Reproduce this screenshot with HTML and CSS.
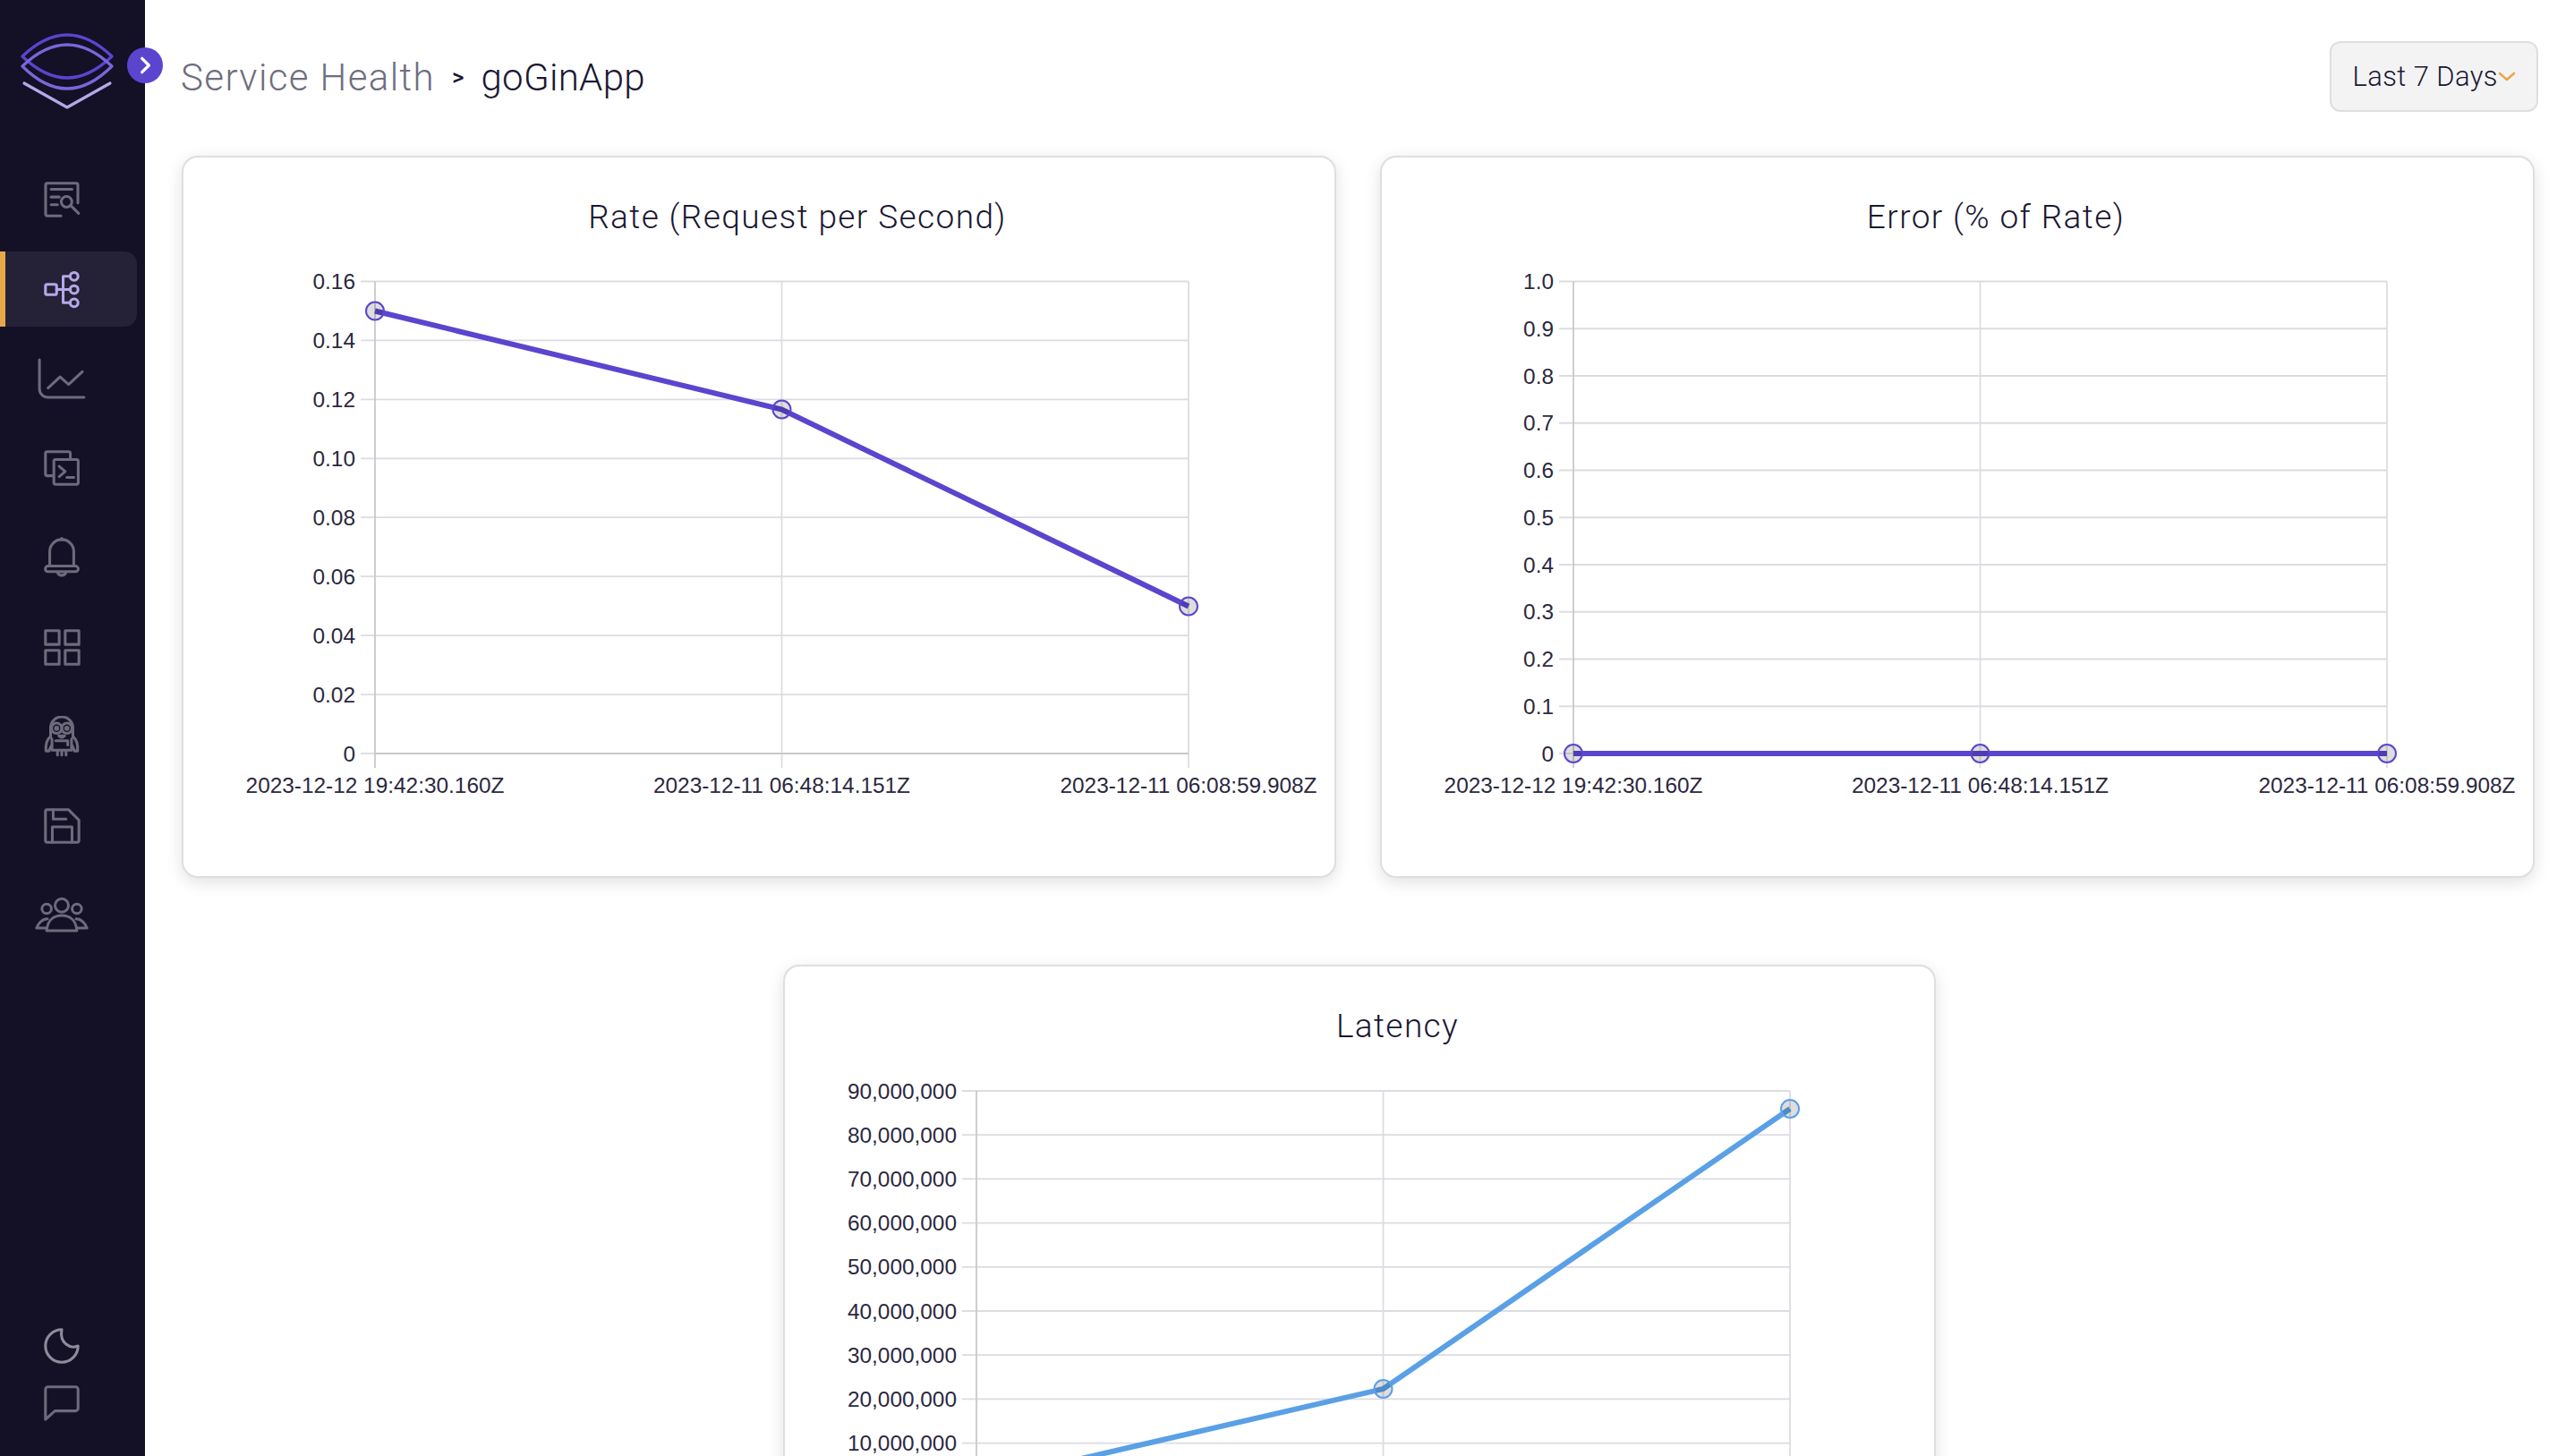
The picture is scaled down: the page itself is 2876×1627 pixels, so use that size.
FILE: index.html
```html
<!DOCTYPE html>
<html lang="en">
<head>
    <meta charset="UTF-8">
    <meta name="viewport" content="width=device-width, initial-scale=1.0">
    <link rel="stylesheet" href="styles.css">
    <title>Service Health</title>
</head>
<body>
    <div class="app">
        <aside class="sidebar">
            <div class="logo">
                <svg width="104" height="86" viewBox="-2 0 104 86" fill="none" stroke-width="3.2" stroke-linecap="round" stroke-linejoin="round">
                    <path stroke="#5b45cf" d="M0 26 Q50 -22 100 26 Q50 74 0 26Z"/>
                    <path stroke="#7a66d9" d="M0 37 Q50 -11 100 37 Q50 87 0 37Z"/>
                    <path stroke="#b5a8e8" d="M2 56 L50 83 L98 56"/>
                </svg>
            </div>
            <button class="toggle">
                <svg width="22" height="22" viewBox="0 0 20 20" fill="none" stroke="#fff" stroke-width="3" stroke-linecap="round" stroke-linejoin="round"><path d="M7 3 L14 10 L7 17"/></svg>
            </button>

            <nav class="nav">
                <a class="nav-item">
                    <svg class="icon" viewBox="0 0 24 24"><path d="M11.5 21.5 H3.6 a1 1 0 0 1 -1 -1 V3.5 a1 1 0 0 1 1 -1 H20.4 a1 1 0 0 1 1 1 V14"/><path d="M5.8 6 H18"/><path d="M5.8 10.5 H10.5"/><path d="M5.8 15 H9.5"/><circle cx="14.8" cy="13.3" r="3.1"/><path d="M17.2 15.5 L21.8 20"/></svg>
                </a>
                <a class="nav-item active">
                    <svg class="icon" viewBox="0 0 24 24"><rect x="2.5" y="9.3" width="6.5" height="6" rx="1"/><path d="M9 12.3 H17"/><path d="M17 4.6 H12.8 V20 H17"/><circle cx="19.2" cy="4.6" r="2.3"/><circle cx="19.2" cy="12.3" r="2.3"/><circle cx="19.2" cy="20" r="2.3"/></svg>
                </a>
                <a class="nav-item">
                    <svg class="icon wide" viewBox="0 0 28 24"><path d="M1 1 V18 a5 5 0 0 0 5 5 H27"/><path d="M6 17.5 L13 11 L18 15.5 L26 8"/></svg>
                </a>
                <a class="nav-item">
                    <svg class="icon" viewBox="0 0 24 24"><path d="M7 16.5 H3.5 a1 1 0 0 1 -1 -1 V3.5 a1 1 0 0 1 1 -1 H16 a1 1 0 0 1 1 1 V7"/><rect x="7.4" y="7" width="14.2" height="14.5" rx="1"/><path d="M10.5 11 L14 14 L10.5 17"/><path d="M15 17.5 H19"/></svg>
                </a>
                <a class="nav-item">
                    <svg class="icon" viewBox="0 0 24 24"><path d="M5 17 V8.5 a7 7 0 0 1 14 0 V17"/><path d="M12 0.8 V1.5"/><path d="M4 17 H20 a1.6 1.6 0 0 1 0 3.2 H4 a1.6 1.6 0 0 1 0 -3.2Z"/><path d="M9.5 20.5 a2.6 2.6 0 0 0 5 0"/></svg>
                </a>
                <a class="nav-item">
                    <svg class="icon" viewBox="0 0 24 24"><rect x="2.5" y="2.5" width="8" height="8"/><rect x="14" y="2.5" width="8" height="8"/><rect x="2.5" y="14" width="8" height="8"/><rect x="14" y="14" width="8" height="8"/></svg>
                </a>
                <a class="nav-item">
                    <svg class="icon" viewBox="0 0 24 24" stroke-width="1.3"><path d="M5.5 12.5 V7 a6.5 6.5 0 0 1 13 0 V12.5"/><circle cx="9" cy="7.2" r="3"/><circle cx="15" cy="7.2" r="3"/><circle cx="9" cy="7.2" r="0.7"/><circle cx="15" cy="7.2" r="0.7"/><path d="M10.3 11.6 H13.7 Q12 13.4 10.3 11.6Z"/><path d="M6.3 13.5 V20 H17.7 V13.5"/><path d="M8.5 14.5 H15.5 V17"/><path d="M5.5 12 C3 14 2.5 17 2.8 20.5 H4.5 L5.8 17.5"/><path d="M18.5 12 C21 14 21.5 17 21.2 20.5 H19.5 L18.2 17.5"/><path d="M9.5 20 V22.8"/><path d="M12 20 V22.8"/><path d="M14.5 20 V22.8"/></svg>
                </a>
                <a class="nav-item">
                    <svg class="icon" viewBox="0 0 24 24"><path d="M3.5 2.5 H16 L22 8.5 V20.5 a1 1 0 0 1 -1 1 H3.5 a1 1 0 0 1 -1 -1 V3.5 a1 1 0 0 1 1 -1Z"/><path d="M7 2.5 V8 H14.5"/><path d="M6.5 21.5 V12.5 H18 V21.5"/></svg>
                </a>
                <a class="nav-item">
                    <svg class="icon wide" viewBox="0 0 32 24"><circle cx="16" cy="6" r="4"/><circle cx="7" cy="8" r="2.8"/><circle cx="25" cy="8" r="2.8"/><path d="M7 21 C7.5 15 11 12 16 12 C21 12 24.5 15 25 21Z"/><path d="M7.5 14 C4.5 14 2 16.5 1 19.5 H6.5"/><path d="M24.5 14 C27.5 14 30 16.5 31 19.5 H25.5"/></svg>
                </a>
            </nav>

            <div class="sidebar-bottom">
                <svg class="icon light" viewBox="0 0 24 24"><path d="M12 3 A9.5 9.5 0 1 0 21.5 12.5 C17 14.5 10.5 11 12 3Z"/></svg>
                <svg class="icon" viewBox="0 0 24 24"><path d="M4 2.5 H20 a1.5 1.5 0 0 1 1.5 1.5 V15 a1.5 1.5 0 0 1 -1.5 1.5 H8 L2.5 21.5 V4 a1.5 1.5 0 0 1 1.5 -1.5Z"/></svg>
            </div>
        </aside>

        <main class="main">
            <header class="topbar">
                <div class="breadcrumb">
                    <span class="crumb-parent">Service Health</span>
                    <span class="crumb-sep">&gt;</span>
                    <span class="crumb-current">goGinApp</span>
                </div>
                <button class="range-btn">
                    Last 7 Days
                    <svg width="20" height="12" viewBox="0 0 20 12" fill="none" stroke="#e8a84a" stroke-width="2.6" stroke-linecap="round" stroke-linejoin="round"><path d="M2 2 L10 9 L18 2"/></svg>
                </button>
            </header>

            <section class="charts">
                <div class="card">
                    <h2 class="card-title">Rate (Request per Second)</h2>
                    <svg class="chart" viewBox="0 0 1284 680">
                        <g class="grid">
                            <path d="M198 24.5 H1123"/><path d="M198 90.4 H1123"/><path d="M198 156.4 H1123"/><path d="M198 222.3 H1123"/><path d="M198 288.2 H1123"/><path d="M198 354.2 H1123"/><path d="M198 420.2 H1123"/><path d="M198 486.1 H1123"/>
                            <path d="M198 552 H214"/><path d="M668.5 24.5 V568"/><path d="M1123 24.5 V568"/>
                        </g>
                        <g class="axis"><path d="M214 24.5 V568"/><path d="M214 552 H1123"/></g>
                        <g class="y-labels">
                            <text x="192" y="32">0.16</text><text x="192" y="98">0.14</text><text x="192" y="164">0.12</text><text x="192" y="230">0.10</text><text x="192" y="296">0.08</text><text x="192" y="362">0.06</text><text x="192" y="428">0.04</text><text x="192" y="494">0.02</text><text x="192" y="559.5">0</text>
                        </g>
                        <g class="x-labels">
                            <text x="214" y="595">2023-12-12 19:42:30.160Z</text><text x="668.5" y="595">2023-12-11 06:48:14.151Z</text><text x="1123" y="595">2023-12-11 06:08:59.908Z</text>
                        </g>
                        <polyline class="line purple" points="214,57.5 668.5,167.5 1123,387.5"/>
                        <g class="points purple"><circle cx="214" cy="57.5" r="10"/><circle cx="668.5" cy="167.5" r="10"/><circle cx="1123" cy="387.5" r="10"/></g>
                    </svg>
                </div>

                <div class="card">
                    <h2 class="card-title">Error (% of Rate)</h2>
                    <svg class="chart" viewBox="0 0 1284 680">
                        <g class="grid">
                            <path d="M198 24.5 H1123"/><path d="M198 77.25 H1123"/><path d="M198 130 H1123"/><path d="M198 182.75 H1123"/><path d="M198 235.5 H1123"/><path d="M198 288.25 H1123"/><path d="M198 341 H1123"/><path d="M198 393.75 H1123"/><path d="M198 446.5 H1123"/><path d="M198 499.25 H1123"/>
                            <path d="M198 552 H214"/><path d="M668.5 24.5 V568"/><path d="M1123 24.5 V568"/>
                        </g>
                        <g class="axis"><path d="M214 24.5 V568"/><path d="M214 552 H1123"/></g>
                        <g class="y-labels">
                            <text x="192" y="32">1.0</text><text x="192" y="85">0.9</text><text x="192" y="137.5">0.8</text><text x="192" y="190">0.7</text><text x="192" y="243">0.6</text><text x="192" y="296">0.5</text><text x="192" y="348.5">0.4</text><text x="192" y="401">0.3</text><text x="192" y="454">0.2</text><text x="192" y="507">0.1</text><text x="192" y="559.5">0</text>
                        </g>
                        <g class="x-labels">
                            <text x="214" y="595">2023-12-12 19:42:30.160Z</text><text x="668.5" y="595">2023-12-11 06:48:14.151Z</text><text x="1123" y="595">2023-12-11 06:08:59.908Z</text>
                        </g>
                        <polyline class="line purple" points="214,552 668.5,552 1123,552"/>
                        <g class="points purple"><circle cx="214" cy="552" r="10"/><circle cx="668.5" cy="552" r="10"/><circle cx="1123" cy="552" r="10"/></g>
                    </svg>
                </div>

                <div class="card card-center">
                    <h2 class="card-title">Latency</h2>
                    <svg class="chart" viewBox="0 0 1284 680">
                        <g class="grid">
                            <path d="M198 25 H1123"/><path d="M198 74.2 H1123"/><path d="M198 123.4 H1123"/><path d="M198 172.6 H1123"/><path d="M198 221.8 H1123"/><path d="M198 271 H1123"/><path d="M198 320.2 H1123"/><path d="M198 369.4 H1123"/><path d="M198 418.6 H1123"/>
                            <path d="M668.5 25 V484"/><path d="M1123 25 V484"/>
                        </g>
                        <g class="axis"><path d="M214 25 V484"/><path d="M214 468 H1123"/></g>
                        <g class="y-labels">
                            <text x="192" y="32.5">90,000,000</text><text x="192" y="81.7">80,000,000</text><text x="192" y="131">70,000,000</text><text x="192" y="180">60,000,000</text><text x="192" y="229.3">50,000,000</text><text x="192" y="278.5">40,000,000</text><text x="192" y="327.7">30,000,000</text><text x="192" y="377">20,000,000</text><text x="192" y="426">10,000,000</text>
                        </g>
                        <polyline class="line blue" points="214,463 668.5,358 1123,45"/>
                        <g class="points blue"><circle cx="214" cy="463" r="10"/><circle cx="668.5" cy="358" r="10"/><circle cx="1123" cy="45" r="10"/></g>
                    </svg>
                </div>
            </section>
        </main>
    </div>
</body>
</html>
```
FILE: styles.css
```css
* {
    box-sizing: border-box;
}

body {
    margin: 0;
    height: 100vh;
    overflow: hidden;
    background-color: #fff;
    font-family: 'Roboto', 'Liberation Sans', sans-serif;
    color: #1a1733;
}

.app {
    display: flex;
    height: 100vh;
}

/* sidebar */
.sidebar {
    position: relative;
    display: flex;
    flex-direction: column;
    flex-shrink: 0;
    width: 162px;
    height: 100%;
    padding-top: 37px;
    background-color: #141026;
}

.logo {
    display: flex;
    height: 84px;
    padding-left: 23px;
}

.toggle {
    position: absolute;
    top: 53px;
    left: 142px;
    display: flex;
    align-items: center;
    justify-content: center;
    width: 40px;
    height: 40px;
    padding: 0;
    border: none;
    border-radius: 50%;
    background-color: #5b45cf;
}

.nav {
    display: flex;
    flex-direction: column;
    gap: 16px;
    margin-top: 60px;
}

.nav-item {
    display: flex;
    align-items: center;
    justify-content: center;
    width: 153px;
    height: 84px;
    padding-right: 21px;
    border-left: 6px solid transparent;
    border-radius: 0 14px 14px 0;
}

.nav-item.active {
    border-left-color: #e8a84a;
    background-color: #252136;
}

.icon {
    width: 46px;
    height: 46px;
    fill: none;
    stroke: #6d6b7b;
    stroke-width: 1.6;
    stroke-linecap: round;
    stroke-linejoin: round;
}

.icon.wide {
    width: 60px;
}

.icon.light {
    stroke: #8e8c9a;
}

.active .icon {
    stroke: #b5a8e8;
}

.sidebar-bottom {
    display: flex;
    flex-direction: column;
    align-items: center;
    gap: 19px;
    margin-top: auto;
    margin-bottom: 36px;
    margin-right: 24px;
}

/* main area */
.main {
    flex: 1;
    min-width: 0;
    padding: 46px 40px 0 40px;
}

.topbar {
    display: flex;
    align-items: center;
    justify-content: space-between;
    height: 79px;
}

.breadcrumb {
    display: flex;
    align-items: center;
    gap: 19px;
    padding-top: 1px;
    font-size: 42px;
    font-weight: 300;
}

.crumb-parent {
    color: #6f6e7e;
    letter-spacing: 1.4px;
}

.crumb-sep {
    font-size: 26px;
    font-weight: 500;
}

.crumb-current {
    font-weight: 350;
    letter-spacing: 0.3px;
}

.range-btn {
    display: flex;
    align-items: center;
    gap: 0;
    height: 79px;
    padding: 0 23px;
    border: 2px solid #dedee3;
    border-radius: 12px;
    background-color: #f3f3f4;
    font-family: inherit;
    font-size: 31px;
    font-weight: 350;
    letter-spacing: 0.4px;
    color: #1a1733;
}

.charts {
    display: grid;
    grid-template-columns: 1290px 1290px;
    justify-content: space-between;
    row-gap: 97px;
    width: 2629px;
    margin-top: 49px;
    margin-left: 1px;
}

.card {
    height: 807px;
    padding-top: 45px;
    border: 2px solid #dedee3;
    border-radius: 18px;
    background-color: #fff;
    box-shadow: 0 5px 18px rgba(0, 0, 0, 0.12);
}

.card-center {
    grid-column: 1 / -1;
    justify-self: center;
    transform: translateX(1px);
}

.card-title {
    height: 44px;
    margin: 0 0 25px 0;
    padding-left: 86px;
    text-align: center;
    font-size: 37px;
    line-height: 44px;
    font-weight: 350;
    letter-spacing: 1.4px;
}

.chart {
    display: block;
    width: 1284px;
    height: 680px;
}

.grid path {
    fill: none;
    stroke: #dcdce1;
    stroke-width: 1.76;
}

.axis path {
    fill: none;
    stroke: #c8c8cc;
    stroke-width: 1.76;
}

.chart text {
    font-family: 'Liberation Sans', Arial, sans-serif;
    font-size: 24.4px;
    fill: #2b2840;
}

.y-labels text {
    text-anchor: end;
}

.x-labels text {
    text-anchor: middle;
}

.y-labels, .x-labels {
    transform: translateY(1px);
}

.line {
    fill: none;
    stroke-width: 6;
}

.line.purple {
    stroke: #5b45cf;
}

.line.blue {
    stroke: #5aa0e6;
}

.points circle {
    fill: rgba(0, 0, 0, 0.13);
    stroke-width: 2;
}

.points.purple circle {
    stroke: #5b45cf;
}

.points.blue circle {
    stroke: #5aa0e6;
}
```
